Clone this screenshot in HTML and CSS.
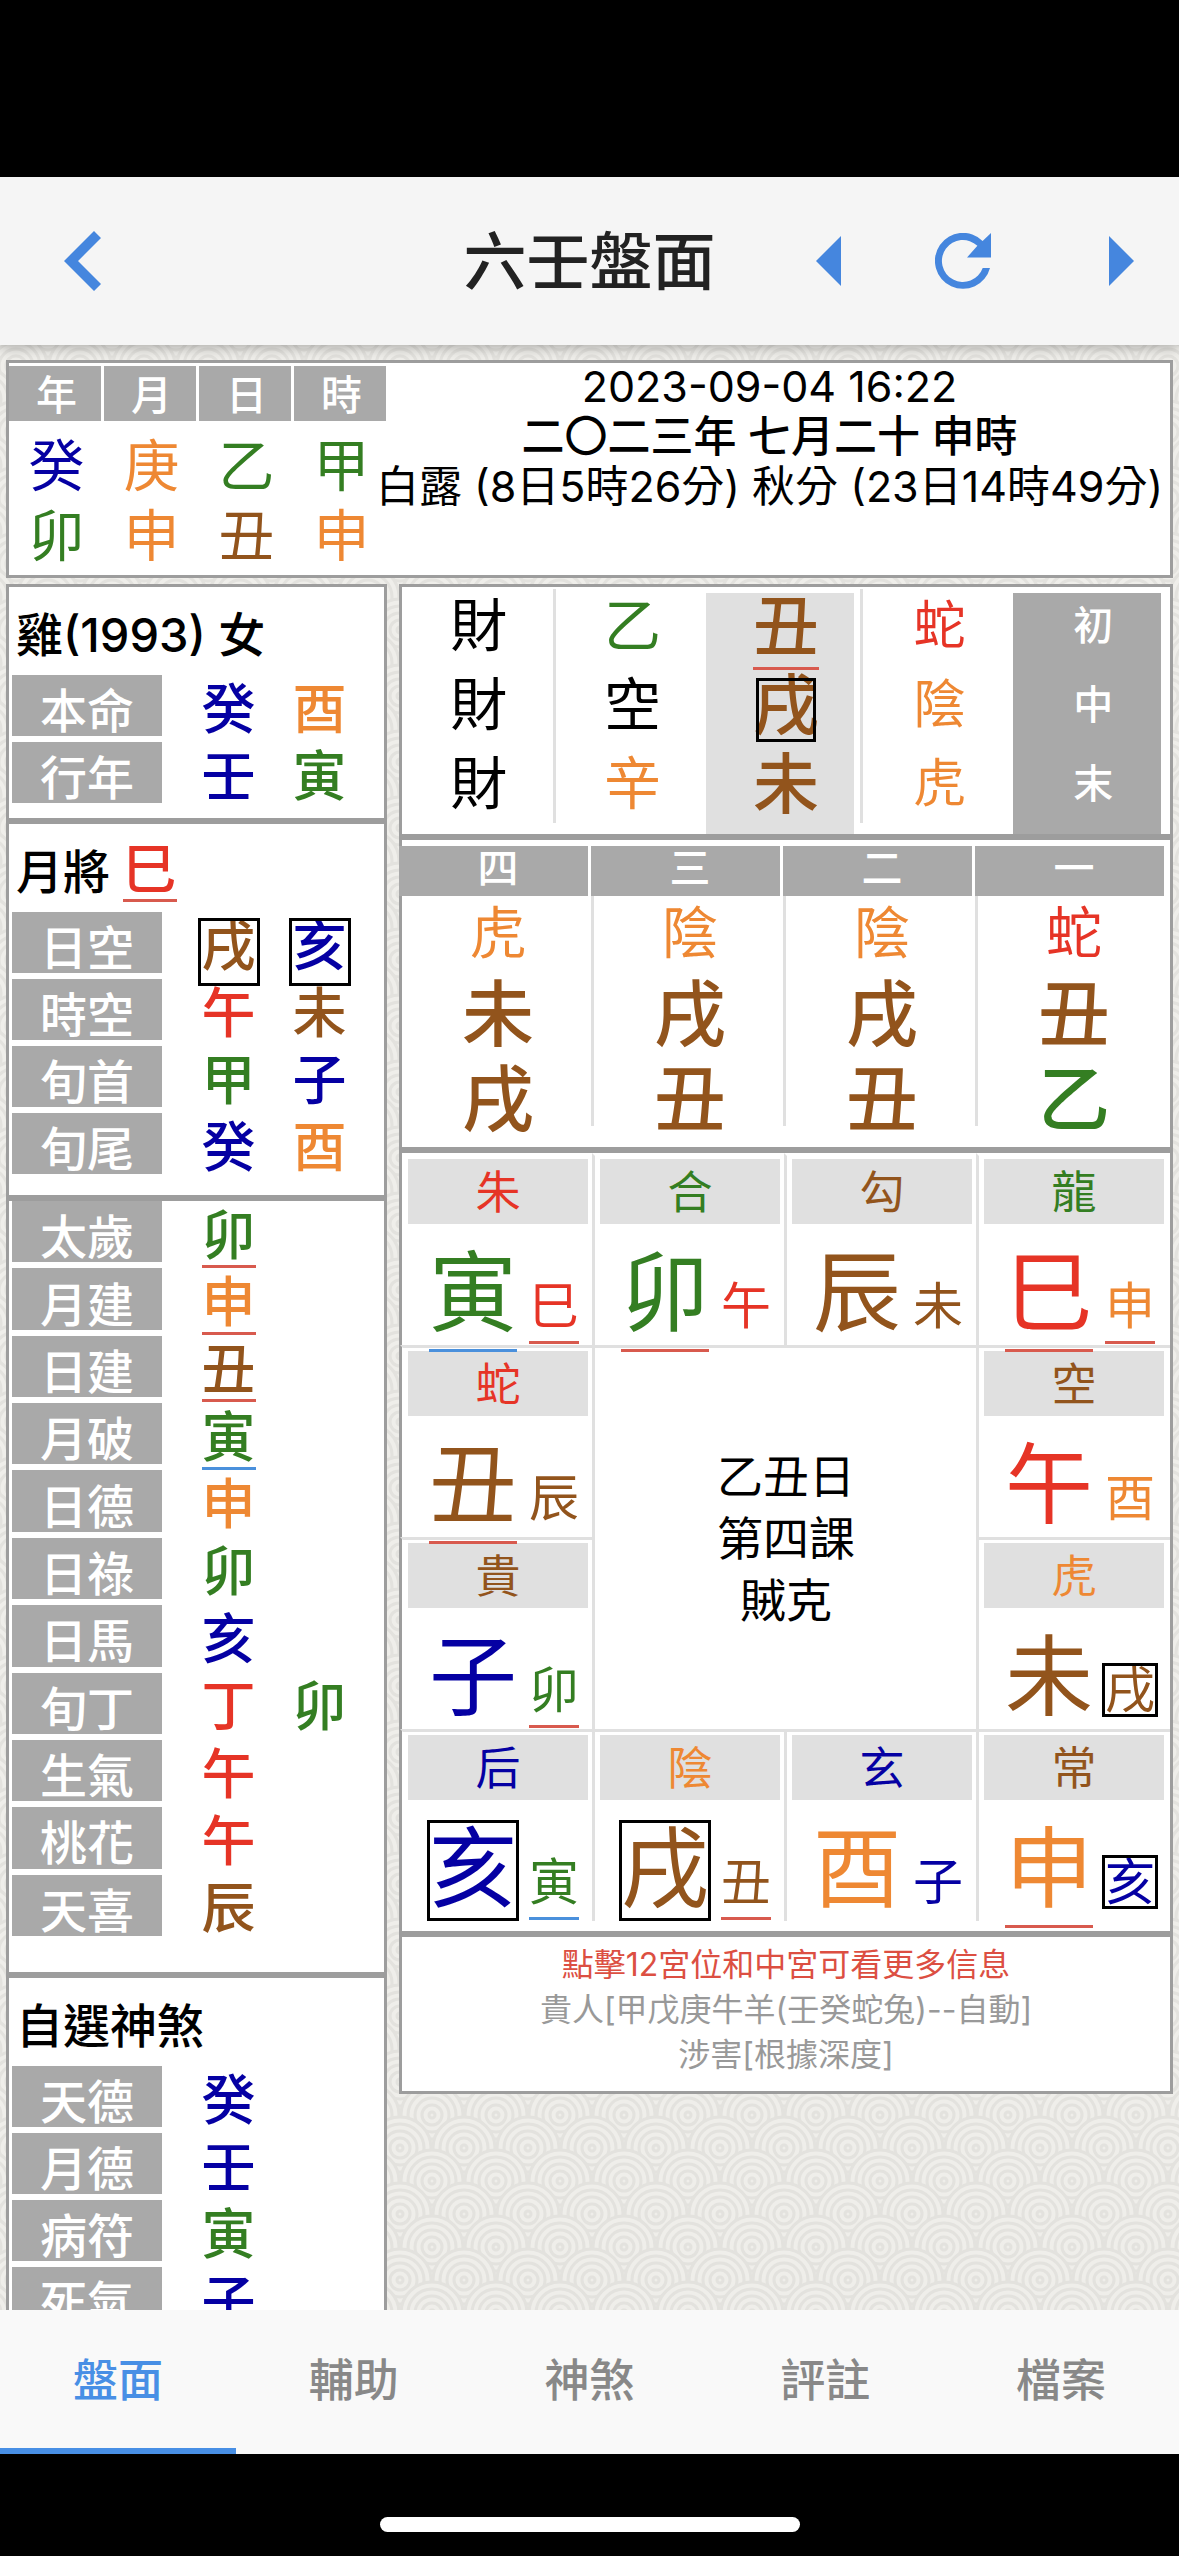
FILE: index.html
```html
<!DOCTYPE html>
<html lang="zh-Hant">
<head>
<meta charset="utf-8">
<meta name="viewport" content="width=device-width, initial-scale=1">
<title>六壬盤面</title>
<link rel="stylesheet" href="styles.css">
</head>
<body>
<header class="topbar">
  <div class="topbar-side">
    <button class="icon-btn" type="button" aria-label="返回">
      <svg width="37" height="60" viewBox="0 0 37 60"><path d="M30 0L37 7L14 30L37 53L30 60L0 30Z"/></svg>
    </button>
  </div>
  <h1 class="topbar-title">六壬盤面</h1>
  <div class="topbar-side topbar-actions">
    <button class="icon-btn" type="button" aria-label="上一個">
      <svg width="25" height="50" viewBox="0 0 25 50"><path d="M25 0V50L0 25Z"/></svg>
    </button>
    <button class="icon-btn icon-refresh" type="button" aria-label="刷新">
      <svg width="56" height="56" viewBox="0 0 56 56"><path d="M55 35A28 28 0 1 1 47.6 7.9L56 0V24.5H32L42.4 12.8A21 21 0 1 0 47.7 35Z"/></svg>
    </button>
    <button class="icon-btn" type="button" aria-label="下一個">
      <svg width="25" height="50" viewBox="0 0 25 50"><path d="M0 0V50L25 25Z"/></svg>
    </button>
  </div>
</header>

<main class="content">
  <section class="panel summary">
    <table class="pillars">
      <thead><tr><th scope="col">年</th><th scope="col">月</th><th scope="col">日</th><th scope="col">時</th></tr></thead>
      <tbody>
        <tr><td class="water">癸</td><td class="metal">庚</td><td class="wood">乙</td><td class="wood">甲</td></tr>
        <tr><td class="wood">卯</td><td class="metal">申</td><td class="earth">丑</td><td class="metal">申</td></tr>
      </tbody>
    </table>
    <div class="dates">
      <p>2023-09-04 16:22</p>
      <p class="dates-lunar">二〇二三年 七月二十 申時</p>
      <p>白露 (8日5時26分) 秋分 (23日14時49分)</p>
    </div>
  </section>

  <div class="columns">
    <div class="left">
      <section class="panel person">
        <h2 class="panel-title">雞(1993) 女</h2>
        <table class="facts">
          <tr><th scope="row">本命</th><td><span class="g water">癸</span></td><td><span class="g metal">酉</span></td></tr>
          <tr><th scope="row">行年</th><td><span class="g water">壬</span></td><td><span class="g wood">寅</span></td></tr>
        </table>
      </section>
      <section class="panel general">
        <h2 class="panel-title">月將 <span class="g fire lucky">巳</span></h2>
        <table class="facts">
          <tr><th scope="row">日空</th><td><span class="g earth boxed">戌</span></td><td><span class="g water boxed">亥</span></td></tr>
          <tr><th scope="row">時空</th><td><span class="g fire">午</span></td><td><span class="g earth">未</span></td></tr>
          <tr><th scope="row">旬首</th><td><span class="g wood">甲</span></td><td><span class="g water">子</span></td></tr>
          <tr><th scope="row">旬尾</th><td><span class="g water">癸</span></td><td><span class="g metal">酉</span></td></tr>
        </table>
      </section>
      <section class="panel spirits">
        <table class="facts facts-long">
          <tr><th scope="row">太歲</th><td><span class="g wood lucky">卯</span></td><td></td></tr>
          <tr><th scope="row">月建</th><td><span class="g metal lucky">申</span></td><td></td></tr>
          <tr><th scope="row">日建</th><td><span class="g earth lucky">丑</span></td><td></td></tr>
          <tr><th scope="row">月破</th><td><span class="g wood broken">寅</span></td><td></td></tr>
          <tr><th scope="row">日德</th><td><span class="g metal">申</span></td><td></td></tr>
          <tr><th scope="row">日祿</th><td><span class="g wood">卯</span></td><td></td></tr>
          <tr><th scope="row">日馬</th><td><span class="g water">亥</span></td><td></td></tr>
          <tr><th scope="row">旬丁</th><td><span class="g fire">丁</span></td><td><span class="g wood">卯</span></td></tr>
          <tr><th scope="row">生氣</th><td><span class="g fire">午</span></td><td></td></tr>
          <tr><th scope="row">桃花</th><td><span class="g fire">午</span></td><td></td></tr>
          <tr><th scope="row">天喜</th><td><span class="g earth">辰</span></td><td></td></tr>
        </table>
      </section>
      <section class="panel custom">
        <h2 class="panel-title">自選神煞</h2>
        <table class="facts">
          <tr><th scope="row">天德</th><td><span class="g water">癸</span></td><td></td></tr>
          <tr><th scope="row">月德</th><td><span class="g water">壬</span></td><td></td></tr>
          <tr><th scope="row">病符</th><td><span class="g wood">寅</span></td><td></td></tr>
          <tr><th scope="row">死氣</th><td><span class="g water">子</span></td><td></td></tr>
        </table>
      </section>
    </div>

    <div class="right">
      <section class="panel passes">
        <div class="pass"><span>財</span><span>財</span><span>財</span></div>
        <div class="pass"><span class="wood">乙</span><span>空</span><span class="metal">辛</span></div>
        <div class="pass pass-branch"><span class="g earth lucky">丑</span><span class="g earth boxed">戌</span><span class="g earth">未</span></div>
        <div class="pass pass-god"><span class="fire">蛇</span><span class="metal">陰</span><span class="metal">虎</span></div>
        <div class="pass pass-name"><span>初</span><span>中</span><span>末</span></div>
      </section>

      <section class="panel lessons">
        <div class="lesson"><h3>四</h3><span class="lesson-god metal">虎</span><span class="earth">未</span><span class="earth">戌</span></div>
        <div class="lesson"><h3>三</h3><span class="lesson-god metal">陰</span><span class="earth">戌</span><span class="earth">丑</span></div>
        <div class="lesson"><h3>二</h3><span class="lesson-god metal">陰</span><span class="earth">戌</span><span class="earth">丑</span></div>
        <div class="lesson"><h3>一</h3><span class="lesson-god fire">蛇</span><span class="earth">丑</span><span class="wood">乙</span></div>
      </section>

      <section class="panel palaces">
        <button type="button" class="palace first"><span class="god fire">朱</span><span class="pair"><span class="g sky wood broken">寅</span><span class="g ground fire lucky">巳</span></span></button>
        <button type="button" class="palace"><span class="god wood">合</span><span class="pair"><span class="g sky wood lucky">卯</span><span class="g ground fire">午</span></span></button>
        <button type="button" class="palace"><span class="god earth">勾</span><span class="pair"><span class="g sky earth">辰</span><span class="g ground earth">未</span></span></button>
        <button type="button" class="palace"><span class="god wood">龍</span><span class="pair"><span class="g sky fire lucky">巳</span><span class="g ground metal lucky">申</span></span></button>
        <button type="button" class="palace first"><span class="god fire">蛇</span><span class="pair"><span class="g sky earth lucky">丑</span><span class="g ground earth">辰</span></span></button>
        <button type="button" class="palace center"><span>乙丑日</span><span>第四課</span><span>賊克</span></button>
        <button type="button" class="palace"><span class="god earth">空</span><span class="pair"><span class="g sky fire">午</span><span class="g ground metal">酉</span></span></button>
        <button type="button" class="palace first"><span class="god earth">貴</span><span class="pair"><span class="g sky water">子</span><span class="g ground wood lucky">卯</span></span></button>
        <button type="button" class="palace"><span class="god metal">虎</span><span class="pair"><span class="g sky earth">未</span><span class="g ground earth boxed">戌</span></span></button>
        <button type="button" class="palace first"><span class="god water">后</span><span class="pair"><span class="g sky water boxed">亥</span><span class="g ground wood broken">寅</span></span></button>
        <button type="button" class="palace"><span class="god metal">陰</span><span class="pair"><span class="g sky earth boxed">戌</span><span class="g ground earth lucky">丑</span></span></button>
        <button type="button" class="palace"><span class="god water">玄</span><span class="pair"><span class="g sky metal">酉</span><span class="g ground water">子</span></span></button>
        <button type="button" class="palace"><span class="god earth">常</span><span class="pair"><span class="g sky metal lucky">申</span><span class="g ground water boxed">亥</span></span></button>
      </section>

      <section class="panel notes">
        <p class="notes-hint">點擊12宮位和中宮可看更多信息</p>
        <p>貴人[甲戊庚牛羊(壬癸蛇兔)--自動]</p>
        <p>涉害[根據深度]</p>
      </section>
    </div>
  </div>
</main>

<nav class="tabs">
  <a class="tab active" href="#chart" aria-current="page">盤面</a>
  <a class="tab" href="#assist">輔助</a>
  <a class="tab" href="#spirits">神煞</a>
  <a class="tab" href="#notes">評註</a>
  <a class="tab" href="#files">檔案</a>
</nav>
<div class="home-area"><div class="home-bar"></div></div>
</body>
</html>
```
FILE: styles.css
```css
:root {
  --wood: #347e22;
  --fire: #e63426;
  --earth: #92541c;
  --metal: #ee8833;
  --water: #0500a3;
  --accent: #4586de;
  --line: #9d9d9d;
  --label: #a9a9a9;
  --cell: #e0e0e0;
}

* { box-sizing: border-box; }

body {
  margin: 0;
  padding-top: 177px;
  height: 100vh;
  display: flex;
  flex-direction: column;
  background: #000;
  color: #000;
  font-family: Inter, "Noto Sans CJK TC", sans-serif;
}

h1, h2, h3, p { margin: 0; }
button { border: 0; padding: 0; background: none; font: inherit; color: inherit; }

.wood { color: var(--wood); }
.fire { color: var(--fire); }
.earth { color: var(--earth); }
.metal { color: var(--metal); }
.water { color: var(--water); }

/* Header */
.topbar {
  flex: none;
  height: 168px;
  display: grid;
  grid-template-columns: 1fr auto 1fr;
  align-items: center;
  background: #f5f5f5;
  box-shadow: 0 2px 12px rgba(0, 0, 0, 0.3);
  position: relative;
  z-index: 2;
}
.topbar-side { display: flex; align-items: center; padding-left: 64px; }
.topbar-actions { justify-content: flex-end; gap: 94px; padding: 0 45px 0 0; }
.topbar-title { font-size: 63px; font-weight: 500; line-height: 80px; color: #222; }
.icon-btn { display: flex; }
.icon-btn svg { fill: var(--accent); }
.icon-refresh { margin-right: 24px; }

/* Scrolling content */
.content {
  flex: 1;
  min-height: 0;
  overflow: hidden;
  padding: 15px 6px 0;
  background: #efeeea url("data:image/svg+xml,%3Csvg xmlns='http://www.w3.org/2000/svg' width='64' height='66' viewBox='0 0 64 66' fill='%23efeeea' stroke='%23e3e2de' stroke-width='3'%3E%3Cdefs%3E%3Cg id='k'%3E%3Ccircle r='31'/%3E%3Ccircle r='24'/%3E%3Ccircle r='17'/%3E%3Ccircle r='10'/%3E%3Ccircle r='3'/%3E%3C/g%3E%3C/defs%3E%3Cuse href='%23k' x='-32' y='-33'/%3E%3Cuse href='%23k' x='32' y='-33'/%3E%3Cuse href='%23k' x='96' y='-33'/%3E%3Cuse href='%23k'/%3E%3Cuse href='%23k' x='64'/%3E%3Cuse href='%23k' x='-32' y='33'/%3E%3Cuse href='%23k' x='32' y='33'/%3E%3Cuse href='%23k' x='96' y='33'/%3E%3Cuse href='%23k' y='66'/%3E%3Cuse href='%23k' x='64' y='66'/%3E%3C/svg%3E") 16px 21px;
}
.panel { border: 3px solid var(--line); background: #fff; }
.columns {
  display: grid;
  grid-template-columns: minmax(0, 381fr) minmax(0, 774fr);
  align-items: start;
  gap: 12px;
  margin-top: 6px;
}

/* Date summary */
.summary { display: flex; padding-bottom: 4px; }
.pillars { flex: none; margin-top: 3px; border-spacing: 0; font-size: 56px; text-align: center; }
.pillars th {
  width: 95px;
  height: 65px;
  padding: 3px 0 0 3px;
  border-right: 3px solid #fff;
  border-bottom: 10px solid #fff;
  background: var(--label);
  color: #fff;
  font-size: 41px;
  font-weight: 500;
  line-height: 50px;
}
.pillars td { padding: 1px 0 0; line-height: 69px; }
.dates {
  flex: 1;
  min-width: 0;
  display: flex;
  flex-direction: column;
  align-items: center;
  margin-top: -2px;
  padding-right: 20px;
  font-size: 43px;
  line-height: 50px;
  white-space: nowrap;
}
.dates-lunar { font-weight: 500; }

/* Glyph marks */
.g { position: relative; display: inline-block; }
.lucky::after, .broken::after, .boxed::after { content: ""; position: absolute; z-index: 1; }
.lucky::after, .broken::after { left: 0; right: 0; bottom: -3px; height: 3px; background: #d85a4e; }
.broken::after { background: #4a90dc; }
.boxed::after { inset: 0 -4px -10px; border: 3px solid #000; }

/* Left column */
.panel-title { padding: 8px 7px 0; font-size: 47px; font-weight: 500; line-height: 80px; }
.panel-title .g, .facts .g { width: 54px; font-size: 54px; font-weight: 500; line-height: 58px; text-align: center; }
.facts { border-spacing: 0; margin-left: 3px; }
.facts tr { height: 67px; }
.facts th {
  width: 150px;
  padding: 10px 0 0;
  border-bottom: 6px solid #fff;
  background: var(--label);
  color: #fff;
  font-size: 47px;
  font-weight: 500;
  line-height: 47px;
}
.facts td { width: 91px; padding: 2px 0 0; text-align: center; font-size: 54px; line-height: 58px; }
.facts th + td { width: 112px; padding-left: 21px; }
.facts-long { height: 741px; }
.person { padding-bottom: 9px; }
.general { padding-bottom: 15px; }
.spirits { padding-bottom: 30px; }

/* Three passes */
.passes { display: grid; grid-template-columns: repeat(5, minmax(0, 1fr)); padding-top: 2px; }
.pass {
  display: grid;
  gap: 7px;
  justify-items: center;
  margin-left: -3px;
  padding: 1px 0 14px 3px;
  background: linear-gradient(var(--cell) 0 0) 0 0 / 3px 234px no-repeat;
  font-size: 57px;
  line-height: 72px;
}
.pass:first-child { background: none; }
.pass-branch {
  background: linear-gradient(var(--cell) 0 0) 0 100% / calc(100% - 9px) calc(100% - 4px) no-repeat;
  font-size: 66px;
  font-weight: 500;
}
.pass-branch .lucky::after { bottom: -8px; }
.pass-branch .boxed::after { inset: 9px 3px -1px; }
.pass-god { font-size: 52px; }
.pass-name {
  background: linear-gradient(var(--label) 0 0) 0 100% / calc(100% - 9px) calc(100% - 4px) no-repeat;
  color: #fff;
  font-size: 40px;
  font-weight: 500;
}

/* Four lessons */
.lessons { display: grid; grid-template-columns: repeat(4, minmax(0, 1fr)); padding-top: 6px; }
.lesson {
  display: grid;
  justify-items: center;
  margin-left: -3px;
  padding: 0 0 6px 3px;
  background: linear-gradient(var(--cell) 0 0) 0 0 / 3px 280px no-repeat;
  font-size: 72px;
  font-weight: 500;
  line-height: 85px;
}
.lesson:first-child { background: none; }
.lesson h3 {
  justify-self: stretch;
  height: 50px;
  margin-left: -3px;
  border-right: 6px solid #fff;
  padding-left: 9px;
  background: var(--label);
  color: #fff;
  font-size: 41px;
  font-weight: 500;
  line-height: 44px;
  text-align: center;
}
.lesson-god { font-size: 56px; font-weight: 400; line-height: 75px; }

/* Twelve palaces */
.palaces { display: grid; grid-template-columns: repeat(4, minmax(0, 1fr)); padding-bottom: 10px; }
.palace {
  display: flex;
  flex-direction: column;
  height: 192px;
  margin-left: -2px;
  padding: 3px 6px 0 5px;
  border-top: 3px solid var(--cell);
  border-left: 3px solid var(--cell);
}
.palace:nth-child(-n+4) { border-top-color: transparent; }
.first { border-left-color: transparent; }
.god { align-self: stretch; height: 65px; background: var(--cell); font-size: 45px; line-height: 67px; text-align: center; }
.pair { display: flex; align-items: baseline; gap: 12px; padding: 18px 0 0 21px; }
.sky { font-size: 88px; line-height: 100px; }
.ground { font-size: 50px; line-height: 60px; }
.sky.lucky::after, .sky.broken::after { bottom: -10px; }
.ground.lucky::after, .ground.broken::after { bottom: -8px; }
.sky.boxed::after { inset: 2px -2px -3px; }
.ground.boxed::after { inset: 3px -3px; }
.center {
  grid-area: 2 / 2 / 4 / 4;
  height: auto;
  align-items: center;
  justify-content: center;
  padding-bottom: 4px;
  font-size: 46px;
  line-height: 62px;
}

/* Notes */
.notes { padding: 5px 0 14px; color: #999; font-size: 32px; line-height: 45px; text-align: center; }
.notes-hint { color: #dc4f42; }

/* Bottom tabs */
.tabs { flex: none; display: flex; background: #f9f9f9; position: relative; z-index: 2; }
.tab {
  flex: 1;
  padding-top: 4px;
  border-bottom: 6px solid transparent;
  color: #888;
  font-size: 45px;
  font-weight: 500;
  line-height: 134px;
  text-align: center;
  text-decoration: none;
}
.tab.active { border-color: #488fe5; color: #488fe5; }
.home-area { flex: none; height: 102px; padding-top: 63px; }
.home-bar { width: 420px; height: 15px; margin: 0 auto; border-radius: 8px; background: #fff; }
```
